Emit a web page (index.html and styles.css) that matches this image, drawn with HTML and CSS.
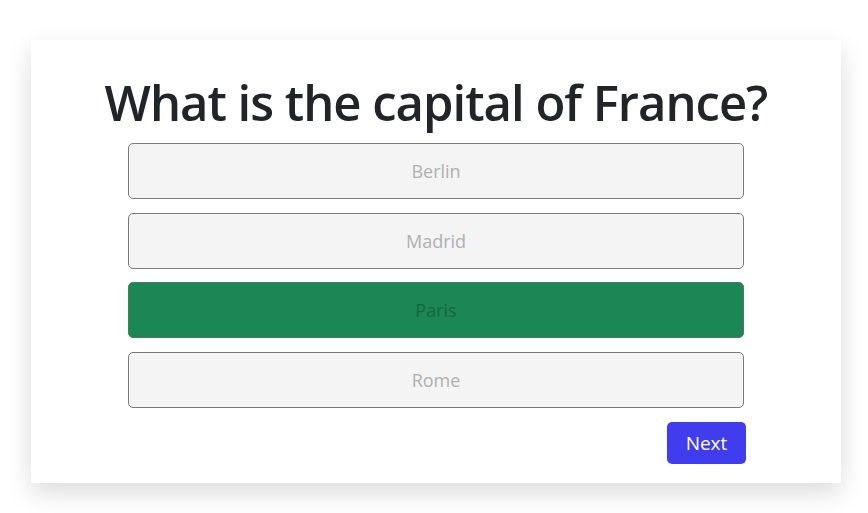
FILE: index.html
```html
<!DOCTYPE html>
<html lang="en">
<head>
<meta charset="utf-8">
<title>Quiz</title>
<link rel="stylesheet" href="styles.css">
</head>
<body>
<main class="page">
  <section class="card">
    <h1 class="question">What is the capital of France?</h1>
    <div class="options">
      <button class="option" disabled>Berlin</button>
      <button class="option" disabled>Madrid</button>
      <button class="option correct" disabled>Paris</button>
      <button class="option" disabled>Rome</button>
    </div>
    <div class="actions">
      <button class="next">Next</button>
    </div>
  </section>
</main>
</body>
</html>
```

FILE: styles.css
```css
* { box-sizing: border-box; }
html, body { margin: 0; padding: 0; background: #ffffff; overflow: hidden; }
body {
  font-family: "Open Sans", "Noto Sans", "Liberation Sans", sans-serif;
  color: #212529;
}
.page {
  width: 868px;
  height: 513px;
  padding-top: 40px;
  padding-left: 31px;
}
.card {
  width: 810px;
  height: 443px;
  background: #ffffff;
  box-shadow: 0 10px 24px rgba(0, 0, 0, 0.14);
  display: flex;
  flex-direction: column;
  align-items: center;
  padding-top: 27px;
}
.question {
  margin: 0;
  font-size: 49px;
  font-weight: 600;
  line-height: 70px;
  letter-spacing: -1px;
  color: #212529;
  height: 76px;
}
.options {
  width: 616px;
  display: flex;
  flex-direction: column;
  gap: 13.5px;
}
.option {
  height: 56px;
  width: 100%;
  border: 1px solid #7a7a7a;
  border-radius: 5px;
  background: #f4f4f4;
  color: #b0b0b0;
  font-family: inherit;
  font-size: 18px;
  padding: 0;
}
.option.correct {
  background: #1b8754;
  color: #16653f;
  border-color: #4a7a60;
}
.actions {
  width: 618px;
  margin-left: 2px;
  display: flex;
  justify-content: flex-end;
  margin-top: 14px;
}
.next {
  width: 79px;
  height: 42px;
  border: none;
  border-radius: 5px;
  background: #3f3ded;
  color: #ffffff;
  font-family: inherit;
  font-size: 19px;
  padding: 0;
}
```
